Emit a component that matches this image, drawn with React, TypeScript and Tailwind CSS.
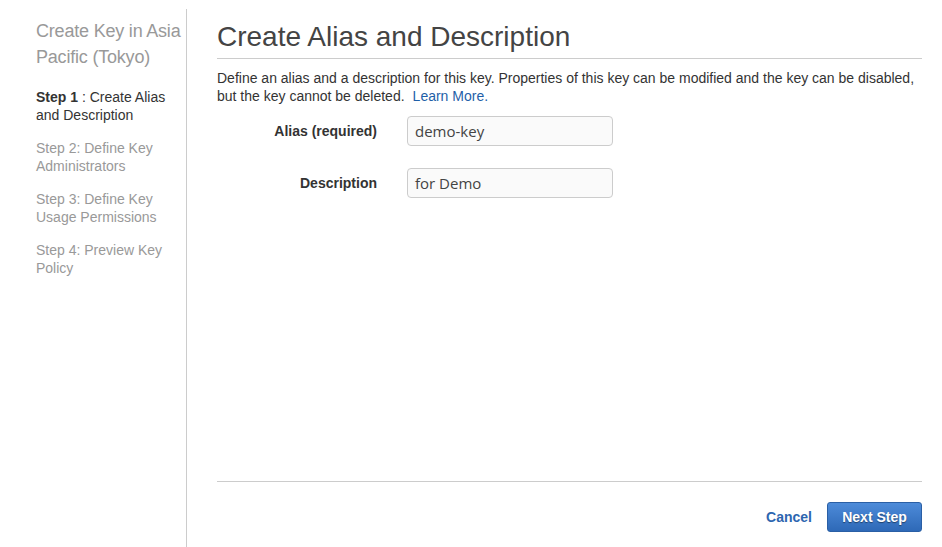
import React from "react";

export default function App() {
  const font = { fontFamily: '"Liberation Sans", Arial, sans-serif' };
  return (
    <div className="flex h-[547px] w-[942px] bg-white overflow-hidden" style={font}>
      <aside className="w-[187px] shrink-0 pt-[9px]">
        <div className="h-full border-r border-[#cccccc] pl-[36px] pr-[2px] pt-[9px]">
          <div className="whitespace-nowrap text-[18px] leading-[26px] tracking-[-0.2px] text-[#999999]">
            Create Key in Asia
            <br />
            Pacific (Tokyo)
          </div>
          <div className="mt-[18px] text-[14px] leading-[18px] text-[#333333]">
            <span className="font-bold">Step 1</span> : Create Alias and Description
          </div>
          <div className="mt-[15px] text-[14px] leading-[18px] text-[#999999] pr-[20px]">
            Step 2: Define Key Administrators
          </div>
          <div className="mt-[15px] text-[14px] leading-[18px] text-[#999999] pr-[20px]">
            Step 3: Define Key Usage Permissions
          </div>
          <div className="mt-[15px] text-[14px] leading-[18px] text-[#999999] pr-[20px]">
            Step 4: Preview Key Policy
          </div>
        </div>
      </aside>
      <main className="flex flex-1 flex-col pl-[30px] pr-[20px]">
        <div className="pt-[20px]">
          <h1 className="border-b border-[#cccccc] pb-[4px] text-[28px] leading-[34px] text-[#444444]">
            Create Alias and Description
          </h1>
          <p className="mt-[10px] text-[14px] leading-[18px] text-[#333333]">
            Define an alias and a description for this key. Properties of this key can be modified and the key can be disabled,
            but the key cannot be deleted.
            <a className="ml-[8px] text-[#1f5fa8]">Learn More.</a>
          </p>
          <div className="mt-[11px] flex flex-col gap-[22px]">
            <div className="flex items-center">
              <label className="w-[190px] pr-[30px] text-right text-[14px] font-bold text-[#333333]">Alias (required)</label>
              <div
                className="flex h-[30px] w-[206px] items-center rounded-[4px] border border-[#cccccc] bg-[#fafafa] px-[7px] text-[15px] text-[#444444]"
                style={{ fontFamily: '"Open Sans", "DejaVu Sans", sans-serif' }}
              >
                demo-key
              </div>
            </div>
            <div className="flex items-center">
              <label className="w-[190px] pr-[30px] text-right text-[14px] font-bold text-[#333333]">Description</label>
              <div
                className="flex h-[30px] w-[206px] items-center rounded-[4px] border border-[#cccccc] bg-[#fafafa] px-[7px] text-[15px] text-[#444444]"
                style={{ fontFamily: '"Open Sans", "DejaVu Sans", sans-serif' }}
              >
                for Demo
              </div>
            </div>
          </div>
        </div>
        <div className="flex-1" />
        <div className="flex items-center justify-end gap-[15px] border-t border-[#cccccc] pb-[15px] pt-[20px]">
          <a className="text-[14px] font-bold text-[#2d66b0]">Cancel</a>
          <button className="h-[30px] w-[95px] rounded-[3px] border border-[#2a5fa5] bg-gradient-to-b from-[#4d8bd9] to-[#2e69b7] text-[14px] font-bold text-white [text-shadow:0_1px_1px_rgba(0,0,0,0.45)]">
            Next Step
          </button>
        </div>
      </main>
    </div>
  );
}
